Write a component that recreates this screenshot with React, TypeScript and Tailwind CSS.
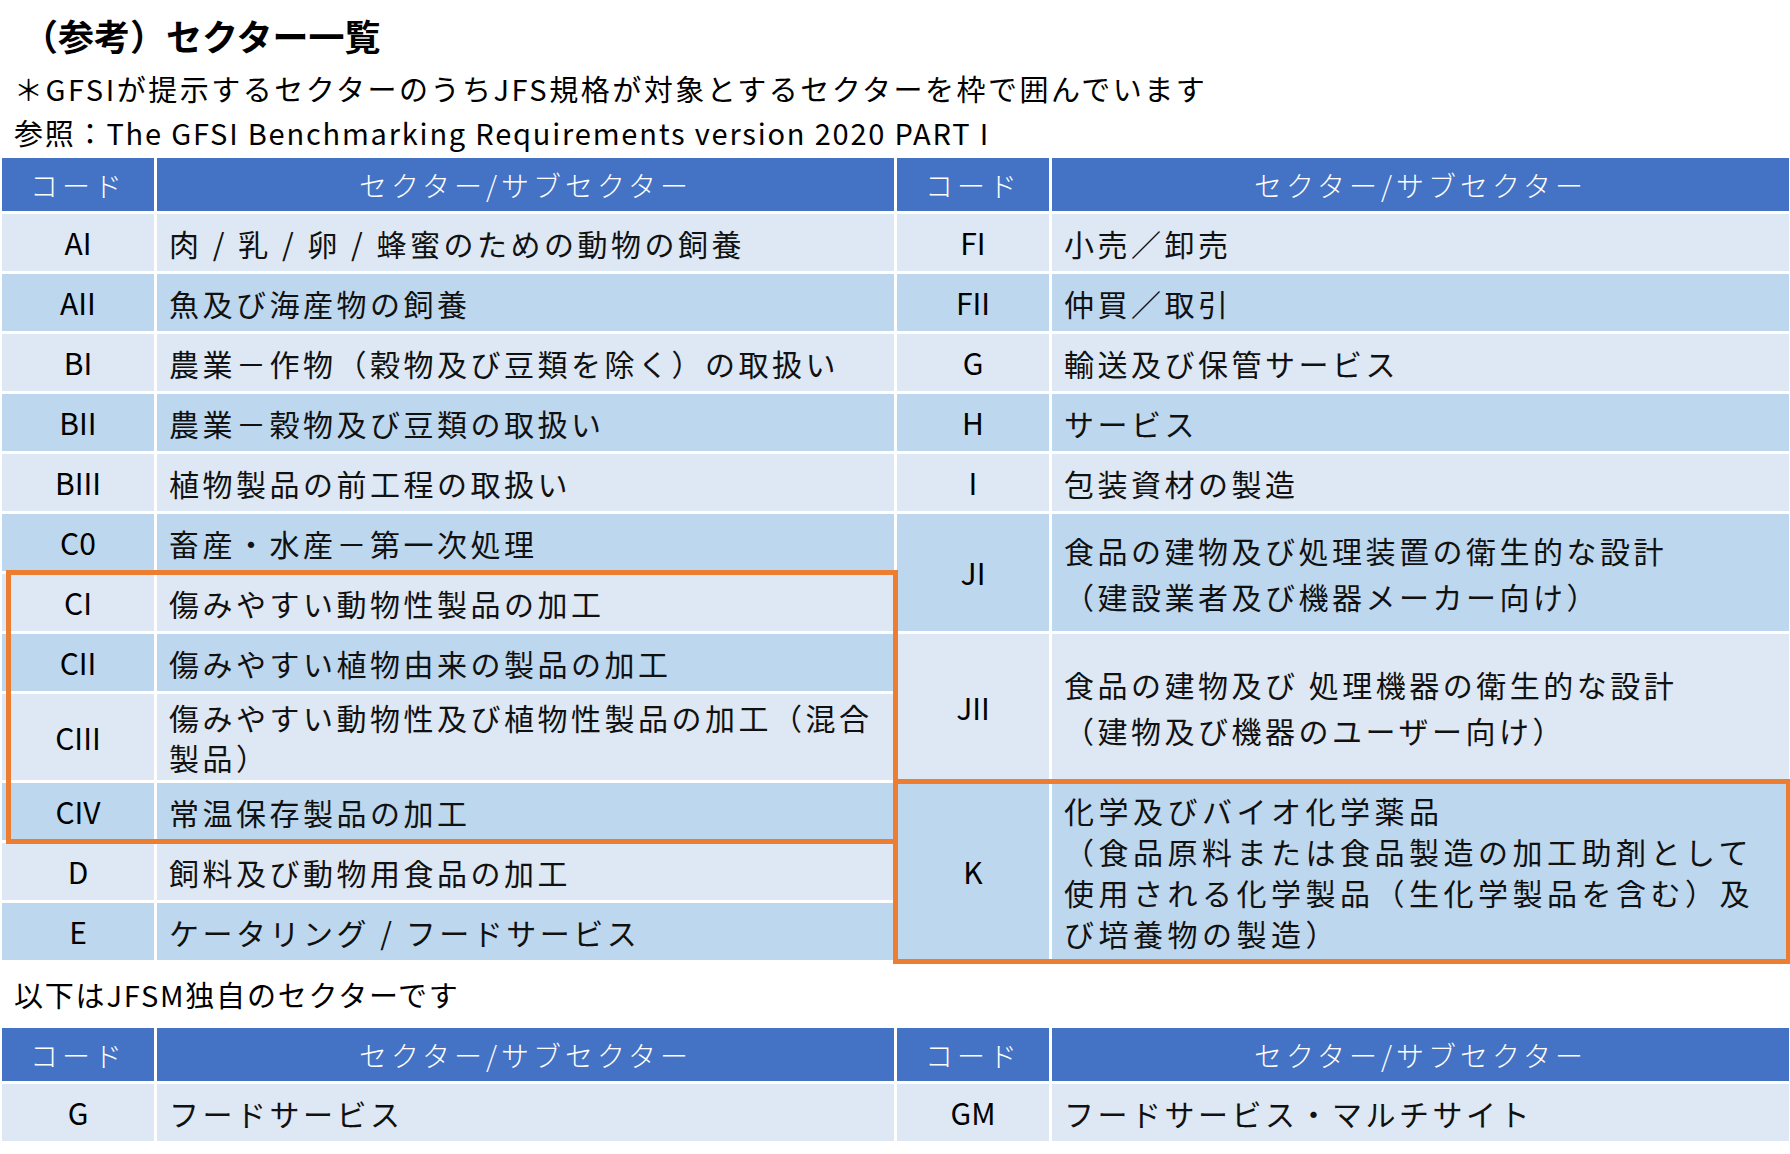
const LIGHT = "bg-[#dde8f4]";
const DARK = "bg-[#bdd7ee]";

const ROWS = [
  "row-start-2",
  "row-start-3",
  "row-start-4",
  "row-start-5",
  "row-start-6",
  "row-start-7",
  "row-start-8",
  "row-start-9",
  "row-start-10",
  "row-start-11",
  "row-start-12",
  "row-start-13",
];

function Code({ children, bg, cls = "" }: { children: React.ReactNode; bg: string; cls?: string }) {
  return <div className={`${bg} ${cls} flex items-center justify-center text-[30px] text-black`}>{children}</div>;
}

function Text({ children, bg, cls = "" }: { children: React.ReactNode; bg: string; cls?: string }) {
  return (
    <div className={`${bg} ${cls} flex items-center pl-3 pr-1 text-[30px] tracking-[3.5px] leading-[46px] text-[#111]`}>
      <div>{children}</div>
    </div>
  );
}

function Header() {
  return (
    <>
      <div className="bg-[#4472c4] flex items-center justify-center text-white text-[28px] tracking-[4px] font-light">コード</div>
      <div className="bg-[#4472c4] flex items-center justify-center text-white text-[28px] tracking-[4px] font-light">セクター/サブセクター</div>
      <div className="bg-[#4472c4] flex items-center justify-center text-white text-[28px] tracking-[4px] font-light">コード</div>
      <div className="bg-[#4472c4] flex items-center justify-center text-white text-[28px] tracking-[4px] font-light">セクター/サブセクター</div>
    </>
  );
}

const left: [string, string, string][] = [
  ["AI", "肉 / 乳 / 卵 / 蜂蜜のための動物の飼養", LIGHT],
  ["AII", "魚及び海産物の飼養", DARK],
  ["BI", "農業－作物（穀物及び豆類を除く）の取扱い", LIGHT],
  ["BII", "農業－穀物及び豆類の取扱い", DARK],
  ["BIII", "植物製品の前工程の取扱い", LIGHT],
  ["C0", "畜産・水産－第一次処理", DARK],
  ["CI", "傷みやすい動物性製品の加工", LIGHT],
  ["CII", "傷みやすい植物由来の製品の加工", DARK],
  ["CIII", "傷みやすい動物性及び植物性製品の加工（混合製品）", LIGHT],
  ["CIV", "常温保存製品の加工", DARK],
  ["D", "飼料及び動物用食品の加工", LIGHT],
  ["E", "ケータリング / フードサービス", DARK],
];

const right: [string, string, string][] = [
  ["FI", "小売／卸売", LIGHT],
  ["FII", "仲買／取引", DARK],
  ["G", "輸送及び保管サービス", LIGHT],
  ["H", "サービス", DARK],
  ["I", "包装資材の製造", LIGHT],
];

export default function App() {
  return (
    <div className="w-[1790px] h-[1154px] bg-white overflow-hidden" style={{ fontFamily: '"Noto Sans CJK JP", "Noto Sans", sans-serif' }}>
      <div className="pl-[22px] pt-[10px] text-[36px] font-bold leading-[50px]">（参考）セクター一覧</div>
      <div className="pl-[14px] text-[29px] tracking-[2.5px] leading-[44px] mt-[6px]">＊GFSIが提示するセクターのうちJFS規格が対象とするセクターを枠で囲んでいます</div>
      <div className="pl-[14px] text-[29px] tracking-[1.8px] leading-[44px]">参照：The GFSI Benchmarking Requirements version 2020 PART I</div>

      <div className="mt-[4px] ml-[2px] w-[1783px] grid grid-cols-[152px_737px_152px_737px] grid-rows-[53px_repeat(8,57px)_86px_repeat(3,57px)] gap-[3px]">
        <Header />
        {left.map(([c, t, bg], i) => (
          <div key={c} className="contents">
            <Code bg={bg} cls={`col-start-1 ${ROWS[i]}`}>{c}</Code>
            <Text bg={bg} cls={`col-start-2 ${ROWS[i]} ${c === "CIII" ? "!leading-[40px] pr-2" : ""}`}>{t}</Text>
          </div>
        ))}
        {right.map(([c, t, bg], i) => (
          <div key={c} className="contents">
            <Code bg={bg} cls={`col-start-3 ${ROWS[i]}`}>{c}</Code>
            <Text bg={bg} cls={`col-start-4 ${ROWS[i]}`}>{t}</Text>
          </div>
        ))}
        <Code bg={DARK} cls="col-start-3 row-start-7 row-span-2">JI</Code>
        <Text bg={DARK} cls="col-start-4 row-start-7 row-span-2">食品の建物及び処理装置の衛生的な設計<br />（建設業者及び機器メーカー向け）</Text>
        <Code bg={LIGHT} cls="col-start-3 row-start-9 row-span-2">JII</Code>
        <Text bg={LIGHT} cls="col-start-4 row-start-9 row-span-2">食品の建物及び 処理機器の衛生的な設計<br />（建物及び機器のユーザー向け）</Text>
        <Code bg={DARK} cls="col-start-3 row-start-11 row-span-3">K</Code>
        <Text bg={DARK} cls="col-start-4 row-start-11 row-span-3 !leading-[41px] !tracking-[4.5px]">化学及びバイオ化学薬品<br />（食品原料または食品製造の加工助剤として使用される化学製品（生化学製品を含む）及び培養物の製造）</Text>

        <div className="col-start-1 col-span-2 row-start-8 row-span-4 border-[5px] border-[#ed7d31] ml-[4px] -mr-[4px] -mt-[4px] -mb-[4px] pointer-events-none z-10" />
        <div className="col-start-3 col-span-2 row-start-11 row-span-3 border-[5px] border-[#ed7d31] -ml-[4px] -mr-[2px] -mt-[4px] -mb-[4px] pointer-events-none z-10" />
      </div>

      <div className="pl-[14px] text-[29px] tracking-[1.8px] leading-[44px] mt-[12px]">以下はJFSM独自のセクターです</div>
      <div className="mt-[12px] ml-[2px] w-[1783px] grid grid-cols-[152px_737px_152px_737px] grid-rows-[53px_57px] gap-[3px]">
        <Header />
        <Code bg={LIGHT}>G</Code>
        <Text bg={LIGHT}>フードサービス</Text>
        <Code bg={LIGHT}>GM</Code>
        <Text bg={LIGHT}>フードサービス・マルチサイト</Text>
      </div>
    </div>
  );
}
